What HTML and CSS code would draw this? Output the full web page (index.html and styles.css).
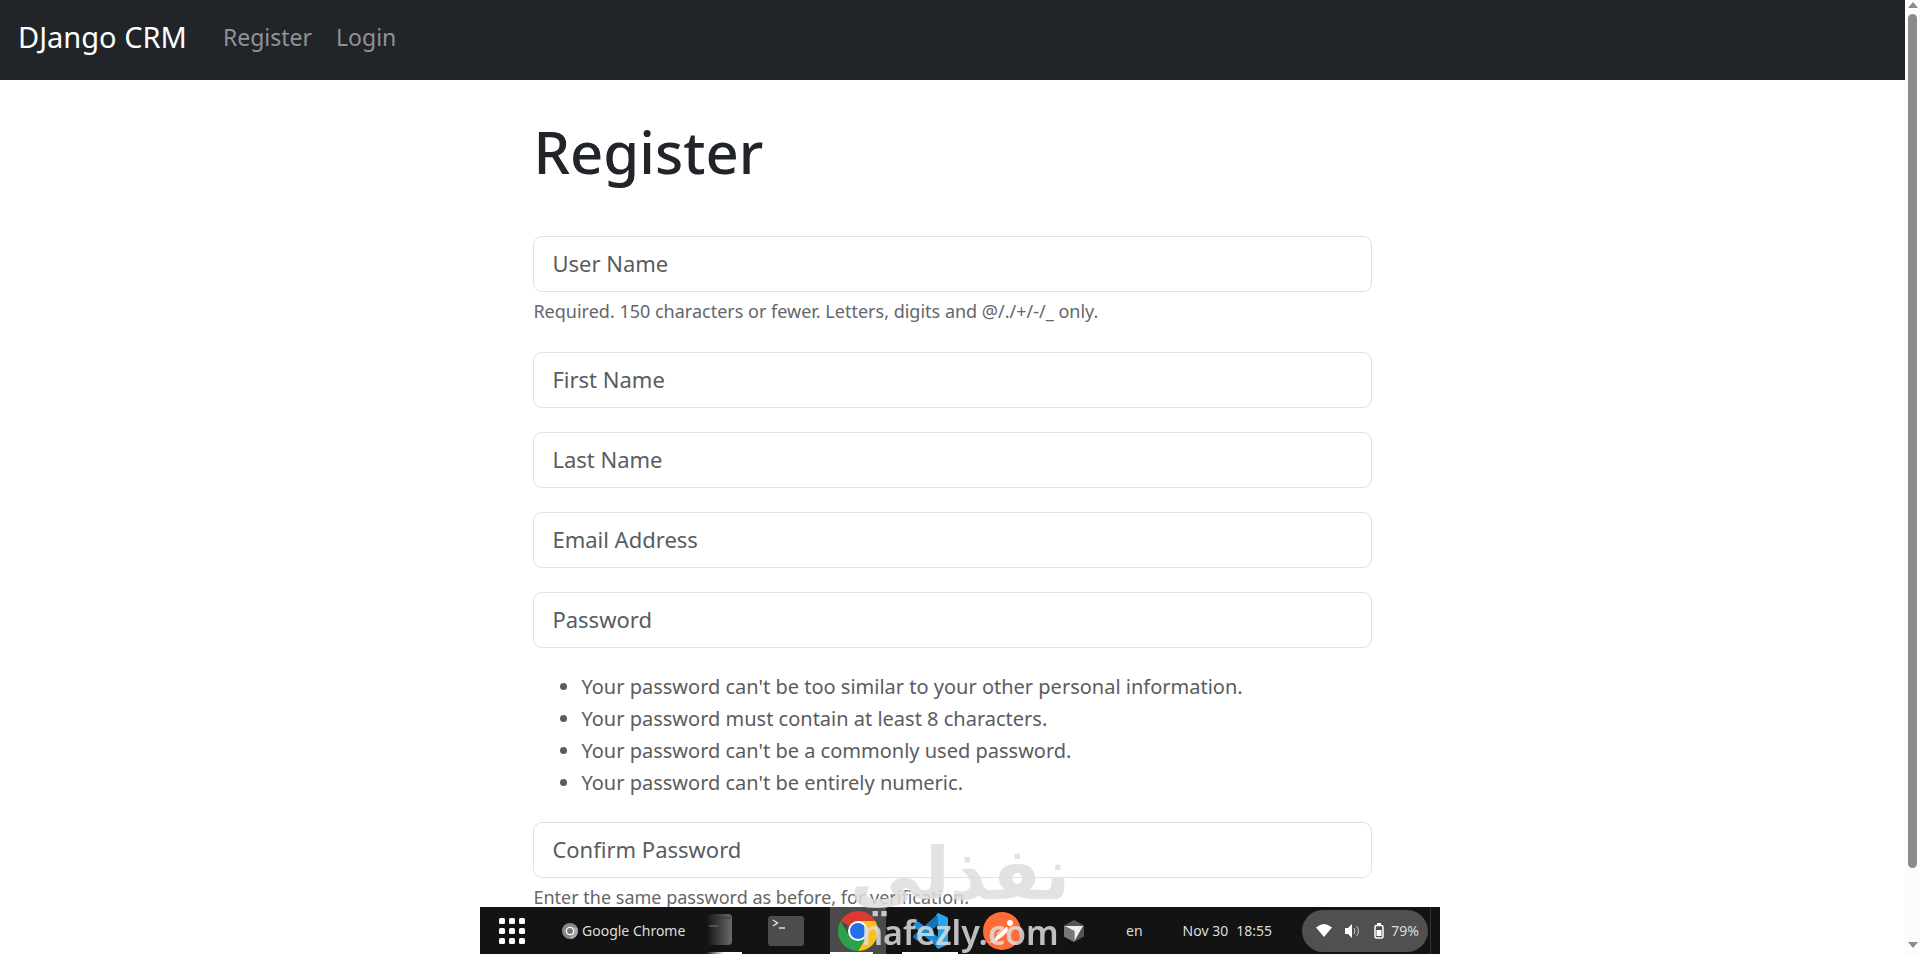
FILE: index.html
```html
<!DOCTYPE html>
<html lang="en">
<head>
<meta charset="utf-8">
<title>Register</title>
<link rel="stylesheet" href="styles.css">
</head>
<body>
<div class="viewport">
  <div class="page">
    <nav class="navbar">
      <a class="brand" href="#">DJango CRM</a>
      <a class="nav-link" href="#">Register</a>
      <a class="nav-link" href="#">Login</a>
    </nav>
    <main class="container">
      <h1 class="title">Register</h1>
      <form class="form">
        <div class="field">
          <input class="control" type="text" placeholder="User Name" aria-label="User Name">
          <small class="help">Required. 150 characters or fewer. Letters, digits and @/./+/-/_ only.</small>
        </div>
        <input class="control" type="text" placeholder="First Name" aria-label="First Name">
        <input class="control" type="text" placeholder="Last Name" aria-label="Last Name">
        <input class="control" type="email" placeholder="Email Address" aria-label="Email Address">
        <input class="control" type="password" placeholder="Password" aria-label="Password">
        <ul class="rules">
          <li>Your password can't be too similar to your other personal information.</li>
          <li>Your password must contain at least 8 characters.</li>
          <li>Your password can't be a commonly used password.</li>
          <li>Your password can't be entirely numeric.</li>
        </ul>
        <div class="field">
          <input class="control" type="password" placeholder="Confirm Password" aria-label="Confirm Password">
          <small class="help">Enter the same password as before, for verification.</small>
        </div>
      </form>
    </main>
  </div>
  <div class="scrollbar">
    <svg class="arrow" viewBox="0 0 10 6"><path d="M0 6L5 0L10 6Z"/></svg>
    <div class="track"><div class="thumb"></div></div>
    <svg class="arrow" viewBox="0 0 10 6"><path d="M0 0L5 6L10 0Z"/></svg>
  </div>
</div>

<div class="taskbar">
  <button class="cell" aria-label="Show applications">
    <svg width="26" height="26" viewBox="0 0 26 26" fill="#fff">
      <rect width="6" height="6" rx="1.5"/><rect x="10" width="6" height="6" rx="1.5"/><rect x="20" width="6" height="6" rx="1.5"/>
      <rect y="10" width="6" height="6" rx="1.5"/><rect x="10" y="10" width="6" height="6" rx="1.5"/><rect x="20" y="10" width="6" height="6" rx="1.5"/>
      <rect y="20" width="6" height="6" rx="1.5"/><rect x="10" y="20" width="6" height="6" rx="1.5"/><rect x="20" y="20" width="6" height="6" rx="1.5"/>
    </svg>
  </button>
  <div class="window-name">
    <svg width="16" height="16" viewBox="0 0 16 16"><circle cx="8" cy="8" r="8" fill="#8a8a8a"/><path d="M8 4.5H15A8 8 0 0 1 8 16L11 10Z" fill="#aaa"/><circle cx="8" cy="8" r="3.6" fill="#777" stroke="#fff" stroke-width="1.3"/></svg>
    <span>Google Chrome</span>
  </div>
  <button class="cell cell-files" aria-label="Files">
    <svg width="36" height="34" viewBox="0 0 36 34">
      <defs><linearGradient id="fade"><stop offset="0" stop-color="#131313"/><stop offset="1" stop-color="#6b6b6b"/></linearGradient></defs>
      <path d="M1 0H22Q26 0 26 4V27Q26 31 22 31H1Z" fill="url(#fade)"/><path d="M3 4H25" stroke="#333"/><path d="M3 12H12" stroke="#777"/>
    </svg>
    <span class="running running-fade"></span>
  </button>
  <button class="cell" aria-label="Terminal">
    <svg width="36" height="30" viewBox="0 0 36 30"><rect width="36" height="30" rx="3" fill="#4d4d4d"/><path d="M5 4L9.500 7L5 10M11 12H17" fill="none" stroke="#ddd" stroke-width="1.500"/></svg>
  </button>
  <button class="cell cell-active" aria-label="Chrome">
    <svg width="40" height="40" viewBox="0 0 40 40">
      <path d="M20 20L2.700 10A20 20 0 0 1 37.300 10Z" fill="#dc3b2f"/>
      <path d="M20 20V10H37.300A20 20 0 0 1 20 40L28.700 25Z" fill="#fbc116"/>
      <path d="M2.700 10L11.300 25L20 30L28.700 25L20 40A20 20 0 0 1 2.700 10Z" fill="#2ba14b"/>
      <circle cx="20" cy="20" r="10" fill="#fff"/><circle cx="20" cy="20" r="8" fill="#2370e8"/>
    </svg>
    <span class="running"></span>
  </button>
  <button class="cell" aria-label="Visual Studio Code">
    <svg width="36" height="36" viewBox="0 0 36 36">
      <path d="M26 1L2 22Q0 24 2 25L4 27Q5 28 7 27L26 12Z" fill="#1673b8"/>
      <path d="M26 35L2 14Q0 12 2 11L4 9Q5 8 7 9L26 24Z" fill="#1c8cd6"/>
      <path d="M26 0L35 4Q36 5 36 6V30Q36 31 35 32L26 36L24 34L26 32V4L24 2Z" fill="#2ba4ee"/>
    </svg>
    <span class="running running-wide"></span>
  </button>
  <button class="cell" aria-label="Postman">
    <svg width="38" height="38" viewBox="0 0 38 38"><circle cx="19" cy="19" r="19" fill="#ff6c37"/><circle cx="27" cy="11" r="3" fill="#fff"/><path d="M24 14L14 21L12 27L5 31L13 29L19 25L25 19Z" fill="#fff"/><path d="M25 13L12 25" stroke="#ff6c37"/></svg>
  </button>
  <button class="cell" aria-label="Cursor">
    <svg width="20" height="22" viewBox="0 0 20 22"><path d="M10 0L20 5.500V16.500L10 22L0 16.500V5.500Z" fill="#555"/><path d="M10 11V22L0 16.500V5.500Z" fill="#777"/><path d="M1 6H19L10.500 21V11Z" fill="#eee"/></svg>
  </button>
  <div class="status">
    <span>en</span>
    <span class="clock"><span>Nov 30</span><span>18:55</span></span>
    <div class="tray">
      <svg width="16" height="13" viewBox="0 0 16 13"><path d="M0 3.500Q8-3.500 16 3.500L8 13Z" fill="#fff"/></svg>
      <svg width="16" height="14" viewBox="0 0 16 14"><path d="M0 4H3L7 0V14L3 10H0Z" fill="#fff"/><path d="M9 4Q11 7 9 10M11.500 2Q15.500 7 11.500 12" fill="none" stroke="#ccc"/></svg>
      <span class="battery">
        <svg width="10" height="16" viewBox="0 0 10 16"><rect x="1" y="2.500" width="8" height="12.500" rx="1.500" fill="none" stroke="#fff" stroke-width="1.500"/><path d="M3 0H7V2H3ZM2.500 7H7.500V13H2.500Z" fill="#fff"/></svg>
        <span>79%</span>
      </span>
    </div>
  </div>
</div>

<div class="watermark">
  <span class="watermark-arabic" lang="ar" dir="rtl">نفذلي</span>
  <span class="watermark-latin">nafezly.com</span>
</div>
</body>
</html>
```
FILE: styles.css
```css
* { box-sizing: border-box; }

body {
  margin: 0;
  overflow: hidden;
  background: #fff;
  color: #212529;
  font-family: "Noto Sans", "Open Sans", sans-serif;
  font-size: 22px;
  font-weight: 400;
  line-height: 36px;
}

button { font: inherit; color: inherit; border: 0; padding: 0; background: none; }
svg { display: block; flex: none; }

.viewport { display: flex; height: 100vh; }
.page { flex: 1; overflow: hidden; }

.navbar {
  display: flex;
  align-items: center;
  height: 80px;
  padding: 0 18px 6px;
  gap: 24px;
  background: #212529;
}
.navbar a { text-decoration: none; }
.brand { color: #fff; font-size: 29px; margin-right: 12px; }
.nav-link { color: #909294; font-size: 23px; }

.container { width: 44%; margin: 0 auto; padding-top: 36px; }
.title { margin: 0; font-size: 58px; font-weight: 500; line-height: 72px; }
.form { display: grid; gap: 24px; margin-top: 48px; }
.field { display: grid; gap: 4px; }

.control {
  width: 100%;
  height: 56px;
  padding: 0 18px 2px;
  border: 1px solid #dee2e6;
  border-radius: 9px;
  background: #fff;
  color: #212529;
  font: inherit;
}
.control::placeholder { color: #595c5f; opacity: 1; }
.help { padding-bottom: 2px; color: #63666a; font-size: 18px; line-height: 30px; }
.rules { margin: -1px 0; padding-left: 48px; color: #595c5f; font-size: 20px; line-height: 32px; }

.scrollbar {
  display: flex;
  flex-direction: column;
  align-items: center;
  width: 15px;
  padding: 2px 0 6px;
  background: #fcfcfc;
}
.arrow { width: 10px; height: 6px; fill: #8b8b8b; }
.track { flex: 1; width: 9px; padding-top: 6px; }
.thumb { height: 92%; border-radius: 5px; background: #8b8b8b; }

.taskbar {
  position: fixed;
  bottom: 0;
  left: 25%;
  display: grid;
  grid-template-columns: 64px 150px 56px repeat(5, 72px) 1fr;
  width: 50%;
  height: 47px;
  background: #131313;
  color: #ddd;
  font-size: 14px;
  line-height: 20px;
}
.cell { position: relative; display: grid; place-items: center; }
.cell-files { justify-items: start; padding-left: 12px; }
.cell-active { margin: 0 8px; background: #4a4a4a; }
.window-name { display: flex; align-items: center; gap: 4px; padding-left: 18px; white-space: nowrap; }
.running { position: absolute; bottom: 0; left: 0; width: 43px; height: 2px; background: #fff; }
.running-wide { left: 8px; width: 56px; }
.running-fade { left: 12px; width: 36px; background: linear-gradient(90deg, #131313, #fff 50%); }
.status {
  display: flex;
  align-items: center;
  padding: 0 3px 0 16px;
  border-right: 9px solid #131313;
  box-shadow: inset -1px 0 #333;
}
.clock { display: flex; gap: 8px; margin: 0 30px 0 auto; }
.tray {
  display: flex;
  align-items: center;
  justify-content: space-between;
  width: 126px;
  height: 42px;
  padding: 0 9px 0 14px;
  border-radius: 21px;
  background: #505050;
}
.battery { display: flex; align-items: center; gap: 7px; }

.watermark {
  position: fixed;
  left: 50%;
  bottom: 0;
  display: grid;
  justify-items: center;
  transform: translateX(-50%);
  color: #ddd;
  opacity: 0.85;
  pointer-events: none;
}
.watermark-arabic { font: bold 72px/72px "DejaVu Sans", sans-serif; }
.watermark-latin { font: 600 34px/44px "Noto Sans", sans-serif; }
```
